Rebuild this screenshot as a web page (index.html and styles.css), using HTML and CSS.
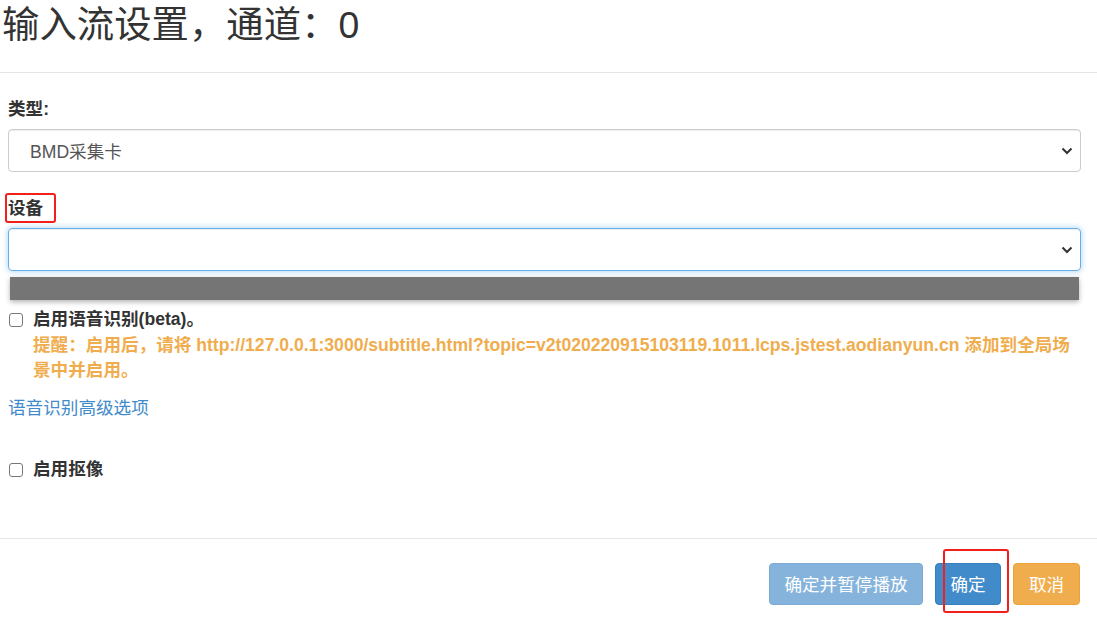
FILE: index.html
```html
<!DOCTYPE html>
<html lang="zh-CN">
<head>
<meta charset="utf-8">
<title>输入流设置</title>
<link rel="stylesheet" href="styles.css">
</head>
<body>
<div class="modal">
  <div class="header">
    <h1 class="title">输入流设置，通道：0</h1>
  </div>
  <div class="body">
    <div class="group">
      <label class="lbl">类型:</label>
      <div class="select">
        <span class="select-text">BMD采集卡</span>
        <svg class="chev" width="12" height="8" viewBox="0 0 12 8"><path d="M1.5 1.5 L6 6 L10.5 1.5" fill="none" stroke="#333" stroke-width="2"/></svg>
      </div>
    </div>
    <div class="group group-dev">
      <label class="lbl lbl-mark">设备<span class="mark"></span></label>
      <div class="select focus">
        <span class="select-text"></span>
        <svg class="chev" width="12" height="8" viewBox="0 0 12 8"><path d="M1.5 1.5 L6 6 L10.5 1.5" fill="none" stroke="#333" stroke-width="2"/></svg>
      </div>
      <div class="dropdown"></div>
    </div>
    <div class="check-row">
      <span class="cb"></span>
      <div class="check-text">
        <div class="bold">启用语音识别(beta)。</div>
        <div class="warn">提醒：启用后，请将 http://127.0.0.1:3000/subtitle.html?topic=v2t020220915103119.1011.lcps.jstest.aodianyun.cn 添加到全局场景中并启用。</div>
      </div>
    </div>
    <a class="link" href="#">语音识别高级选项</a>
    <div class="check-row check-row2">
      <span class="cb"></span>
      <div class="check-text"><div class="bold">启用抠像</div></div>
    </div>
  </div>
  <div class="footer">
    <button class="btn btn-light">确定并暂停播放</button>
    <span class="btn-wrap"><button class="btn btn-primary">确定</button><span class="mark mark-btn"></span></span>
    <button class="btn btn-warning">取消</button>
  </div>
</div>
</body>
</html>
```

FILE: styles.css
```css
* { box-sizing: border-box; }
html, body { margin: 0; padding: 0; background: #fff; }
body {
  font-family: "Liberation Sans", "Noto Sans CJK SC", sans-serif;
  font-size: 17.6px;
  color: #333;
  width: 1097px;
  height: 623px;
  overflow: hidden;
}
.modal { display: flex; flex-direction: column; }
.header {
  height: 73px;
  border-bottom: 1px solid #e5e5e5;
  padding-left: 2px;
}
.title {
  margin: 0;
  font-weight: normal;
  font-size: 37.4px;
  line-height: 50px;
  color: #333;
}
.body {
  padding: 24px 16px 55px 8px;
  display: flex;
  flex-direction: column;
}
.group { display: flex; flex-direction: column; }
.group-dev { margin-top: 24px; }
.lbl {
  font-weight: bold;
  line-height: 24px;
  margin-bottom: 8px;
  align-self: flex-start;
  position: relative;
}
.mark {
  position: absolute;
  border: 2px solid #f2201c;
  border-radius: 3px;
}
.lbl-mark .mark { left: -3px; top: -3px; width: 51px; height: 30px; }
.select {
  height: 43px;
  border: 1px solid #ccc;
  border-radius: 4px;
  display: flex;
  align-items: center;
  justify-content: space-between;
  padding: 0 7px 0 21px;
  box-shadow: inset 0 1px 1px rgba(0,0,0,.075);
}
.select-text { color: #555; }
.select.focus {
  border-color: #66afe9;
  box-shadow: inset 0 1px 1px rgba(0,0,0,.075), 0 0 6px rgba(102,175,233,.6);
}
.dropdown {
  margin: 6px 2px 0 2px;
  height: 23px;
  background: #757575;
  box-shadow: 0 2px 5px rgba(0,0,0,.3);
}
.check-row {
  display: flex;
  align-items: flex-start;
  margin-top: 7px;
}
.cb {
  width: 14px;
  height: 14px;
  border: 1px solid #767676;
  border-radius: 3px;
  margin: 6px 10px 0 1px;
  flex: none;
  background: #fff;
}
.check-text { line-height: 25.7px; }
.bold { font-weight: bold; }
.warn { font-weight: bold; color: #f0ad4e; }
.link {
  margin-top: 11px;
  color: #428bca;
  text-decoration: none;
  line-height: 26px;
  align-self: flex-start;
}
.check-row2 { margin-top: 36px; }
.footer {
  border-top: 1px solid #e5e5e5;
  padding: 24px 17px 0 0;
  display: flex;
  justify-content: flex-end;
  gap: 12px;
}
.btn {
  font-family: "Liberation Sans", "Noto Sans CJK SC", sans-serif;
  font-size: 17.6px;
  color: #fff;
  height: 42px;
  border-radius: 4px;
  border: 1px solid transparent;
  padding: 0;
  cursor: pointer;
}
.btn-light { background: #85b3dc; border-color: #7aaad6; width: 154px; }
.btn-primary { background: #428bca; border-color: #357ebd; width: 66px; }
.btn-warning { background: #f0ad4e; border-color: #eea236; width: 67px; }
.btn-wrap { position: relative; display: flex; }
.mark-btn { left: 8px; top: -14px; width: 66px; height: 64px; }
```
